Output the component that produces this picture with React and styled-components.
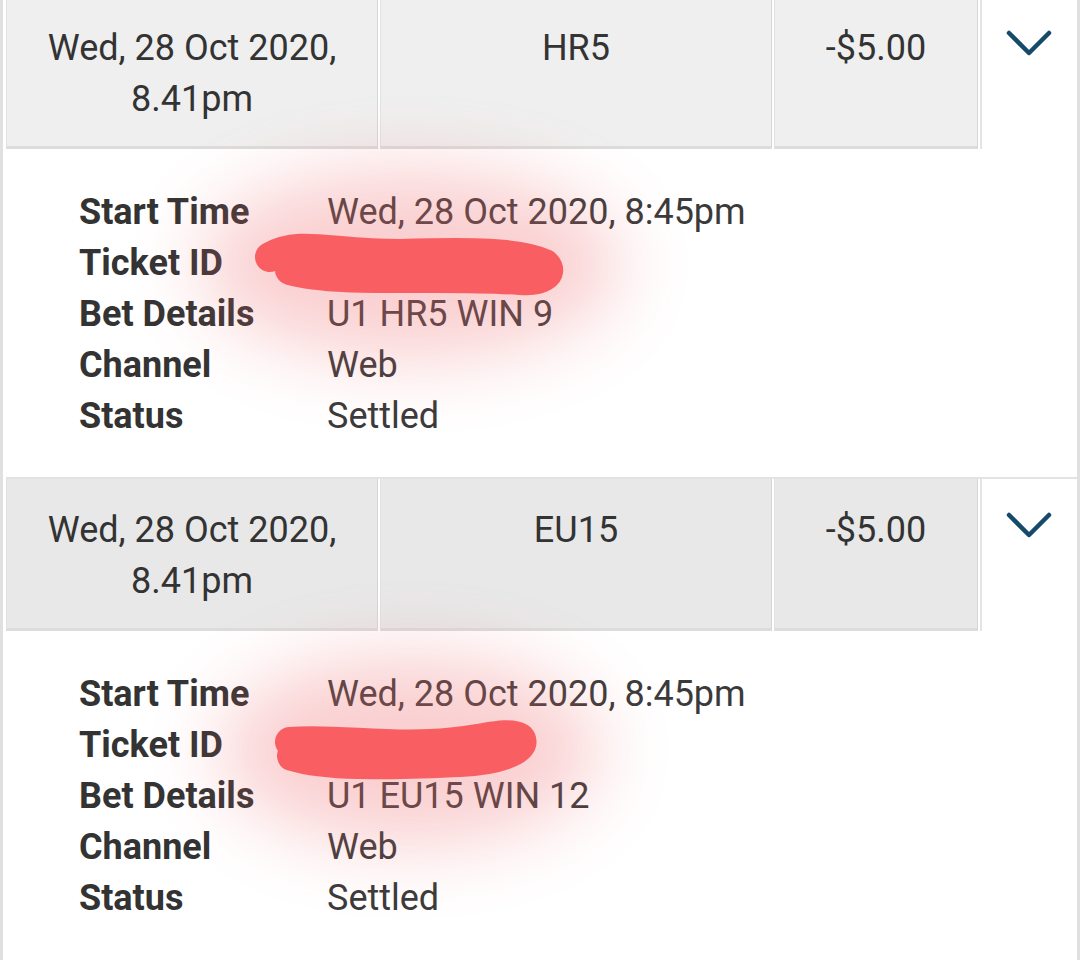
import React from "react";
import styled, { createGlobalStyle } from "styled-components";

const Global = createGlobalStyle`
  html, body { margin: 0; padding: 0; background: #fff; }
  body { font-family: Roboto, "Noto Sans", "Liberation Sans", sans-serif; color: #333; }
`;

const Page = styled.div`
  width: 1080px;
  height: 960px;
  overflow: hidden;
  box-sizing: border-box;
  border-left: 3px solid #e0e0e0;
  border-right: 3px solid #e0e0e0;
  padding-left: 3px;
  background: #fff;
`;

const List = styled.div`
  margin-top: -5px;
`;

const Item = styled.section`
  position: relative;
  border-top: 2px solid #e3e3e3;
`;

const Header = styled.div`
  display: grid;
  grid-template-columns: 372px 392px 204px 1fr;
  column-gap: 2px;
  height: 152px;
`;

const Cell = styled.div`
  box-sizing: border-box;
  background: ${(p) => p.$bg};
  border-left: 1px solid #e2e2e2;
  border-right: 1px solid #d6d6d6;
  border-bottom: 3px solid #dcdcdc;
  padding-top: 26px;
  text-align: center;
  font-size: 36px;
  line-height: 51px;
  color: #333;
`;

const ToggleCell = styled.div`
  box-sizing: border-box;
  border-left: 2px solid #e4e4e4;
  background: #fff;
  display: flex;
  justify-content: center;
  padding-top: 32px;
  padding-right: 2px;
`;

const Details = styled.div`
  position: relative;
  box-sizing: border-box;
  height: 328px;
  padding: 38px 0 0 73px;
`;

const DetailRow = styled.div`
  display: grid;
  grid-template-columns: 248px 1fr;
  font-size: 36px;
  line-height: 51px;
`;

const Label = styled.span`
  font-weight: 700;
  color: #333;
`;

const Value = styled.span`
  color: #3a3a3a;
`;

const Redaction = styled.svg`
  position: absolute;
  left: 0;
  top: 0;
  width: 100%;
  height: 100%;
  overflow: visible;
  pointer-events: none;
`;

const Chevron = () => (
  <svg width="46" height="28" viewBox="0 0 46 28">
    <path
      d="M3 4 L23 24 L43 4"
      fill="none"
      stroke="#154a6b"
      strokeWidth="4.5"
      strokeLinecap="round"
      strokeLinejoin="round"
    />
  </svg>
);

const items = [
  {
    bg: "#efefef",
    race: "HR5",
    bet: "U1 HR5 WIN 9",
    mark: "M270 255 C 300 238, 330 252, 400 252 C 470 250, 520 250, 545 262 C 555 272, 540 280, 520 278 C 440 272, 340 282, 290 268",
    halo: { cx: 410, cy: 262, rx: 210, ry: 95 },
  },
  {
    bg: "#e8e8e8",
    race: "EU15",
    bet: "U1 EU15 WIN 12",
    mark: "M290 740 C 330 736, 380 745, 430 742 C 480 740, 505 728, 520 736 C 528 745, 505 758, 460 760 C 400 762, 330 766, 292 754",
    halo: { cx: 410, cy: 748, rx: 190, ry: 95 },
  },
];

function BetItem({ item, offsetY }) {
  return (
    <Item>
      <Header>
        <Cell $bg={item.bg}>
          Wed, 28 Oct 2020,
          <br />
          8.41pm
        </Cell>
        <Cell $bg={item.bg}>{item.race}</Cell>
        <Cell $bg={item.bg}>-$5.00</Cell>
        <ToggleCell>
          <Chevron />
        </ToggleCell>
      </Header>
      <Details>
        <DetailRow>
          <Label>Start Time</Label>
          <Value>Wed, 28 Oct 2020, 8:45pm</Value>
        </DetailRow>
        <DetailRow>
          <Label>Ticket ID</Label>
          <Value></Value>
        </DetailRow>
        <DetailRow>
          <Label>Bet Details</Label>
          <Value>{item.bet}</Value>
        </DetailRow>
        <DetailRow>
          <Label>Channel</Label>
          <Value>Web</Value>
        </DetailRow>
        <DetailRow>
          <Label>Status</Label>
          <Value>Settled</Value>
        </DetailRow>
      </Details>
      <Redaction>
        <defs>
          <filter id={`glow${offsetY}`} x="-50%" y="-80%" width="200%" height="260%">
            <feGaussianBlur stdDeviation="38" />
          </filter>
        </defs>
        <g transform={`translate(-6 ${-offsetY})`}>
          <ellipse
            cx={item.halo.cx}
            cy={item.halo.cy}
            rx={item.halo.rx}
            ry={item.halo.ry}
            fill="#f06a6e"
            opacity="0.32"
            filter={`url(#glow${offsetY})`}
          />
          <path
            d={item.mark}
            fill="#f95f62"
            stroke="#f95f62"
            strokeWidth="30"
            strokeLinecap="round"
            strokeLinejoin="round"
          />
        </g>
      </Redaction>
    </Item>
  );
}

export default function App() {
  return (
    <>
      <Global />
      <Page>
        <List>
          <BetItem item={items[0]} offsetY={-5} />
          <BetItem item={items[1]} offsetY={477} />
        </List>
      </Page>
    </>
  );
}
